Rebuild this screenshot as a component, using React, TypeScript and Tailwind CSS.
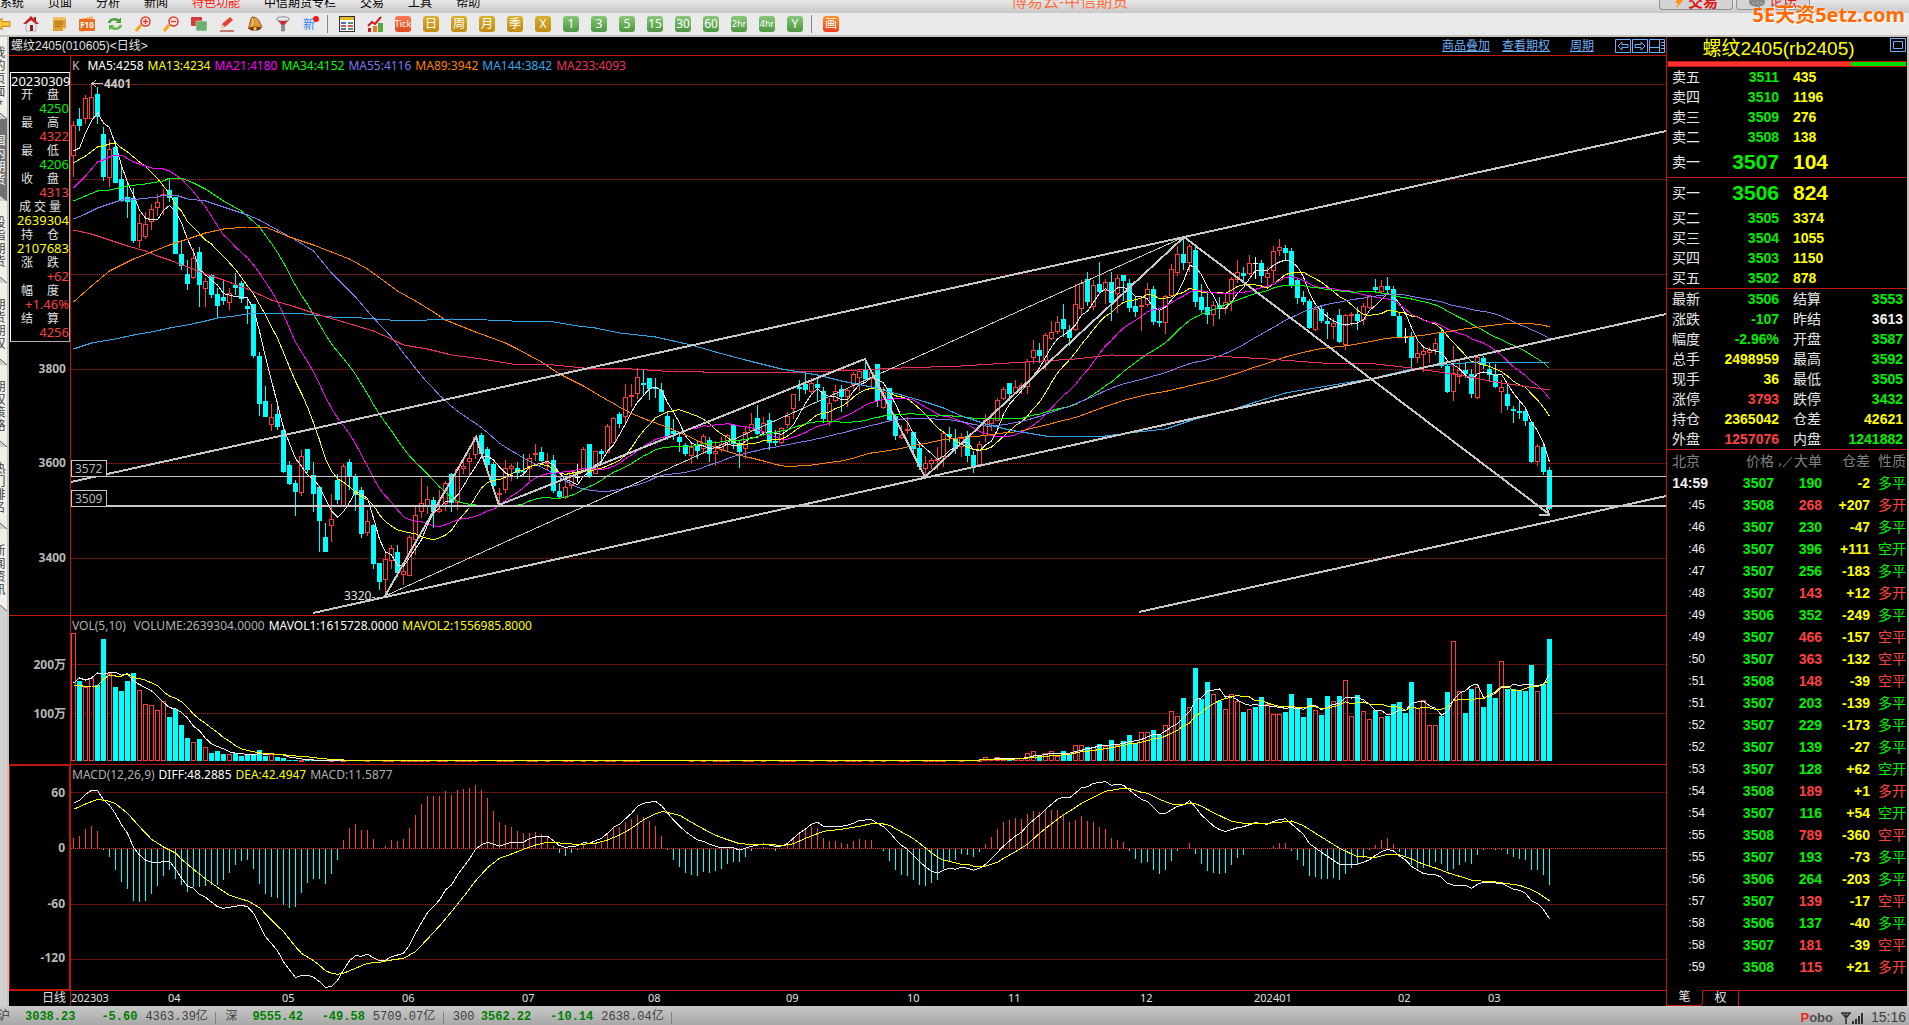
import { ReactNode } from "react";

const FIRST_X = 73.5;
const STEP = 6;

// every bar: colour, body top, body bottom, high, low
const CANDLES = `R 125 156 121 177,C 119 126 108 131,R 98 119 95 124,R 97 119 84 119,C 94 117 87 124,C 134 177 127 181,
R 149 178 139 187,C 147 183 141 183,C 179 201 167 202,C 197 202 181 218,C 198 241 188 243,R 223 241 214 248,
R 224 237 212 239,R 209 222 204 230,R 202 208 194 216,R 194 195 189 215,C 190 198 179 202,C 197 254 197 254,
C 254 266 242 270,C 274 284 260 290,R 258 278 248 279,C 252 285 247 307,R 281 289 278 307,C 275 295 274 298,
C 294 306 288 317,C 297 301 280 305,R 293 303 288 310,C 285 288 273 295,C 283 299 281 303,C 306 309 299 324,
C 304 356 304 358,C 356 404 352 416,C 401 417 386 417,R 417 425 404 431,C 414 427 401 430,C 430 472 427 473,
C 465 484 461 485,C 483 492 480 516,R 456 493 450 496,C 449 470 449 473,C 475 494 462 512,C 487 521 487 552,
C 537 552 523 552,R 519 526 494 542,C 480 500 474 504,R 466 506 464 507,C 462 476 459 490,C 476 495 474 511,
C 490 534 487 538,R 521 533 510 536,C 525 564 524 569,C 563 582 563 590,R 559 580 553 597,R 548 561 545 569,
C 552 573 545 577,R 571 575 564 585,R 537 576 535 576,R 515 540 505 555,R 503 512 478 518,R 499 506 486 514,
C 500 512 497 528,R 509 512 490 513,R 483 504 481 511,C 474 503 473 512,R 469 503 467 510,R 466 469 460 474,
R 458 462 453 476,R 437 455 436 459,C 435 454 433 456,C 449 465 447 468,C 464 486 462 487,R 493 495 488 504,
R 468 490 460 493,R 466 469 464 481,C 468 473 462 479,C 471 472 454 477,R 458 469 454 481,R 453 455 444 461,
C 452 461 447 462,R 462 463 453 471,C 460 491 455 493,C 491 497 483 498,R 487 498 477 499,R 471 486 470 489,
W 477 477 464 482,R 449 469 447 471,C 444 476 444 478,R 451 474 451 474,C 451 454 449 464,R 426 453 424 453,
R 418 443 417 443,C 414 424 412 428,R 397 417 384 423,R 395 397 384 407,R 377 394 368 399,C 383 385 370 395,
C 378 389 378 400,C 387 389 378 398,C 390 412 383 412,C 416 438 412 440,C 431 434 419 440,C 437 442 434 452,
C 445 454 443 456,R 447 456 444 463,C 446 451 440 459,R 436 449 434 454,C 440 454 437 462,R 451 454 441 466,
R 444 450 437 452,R 435 445 434 451,C 425 444 424 449,C 443 452 440 468,R 432 449 426 459,R 424 431 413 432,
C 418 434 405 435,R 423 433 417 436,C 420 443 413 450,C 441 443 430 446,R 428 443 427 444,R 416 425 412 428,
R 394 409 394 419,C 387 389 380 401,C 384 390 374 394,R 383 392 378 395,C 384 388 377 401,C 391 419 387 423,
R 403 422 398 426,R 391 401 385 402,C 389 397 385 412,R 390 397 389 407,R 374 385 372 389,R 371 378 369 391,
C 369 379 359 381,R 372 379 370 386,C 364 401 364 407,R 392 408 387 409,C 388 420 388 422,C 416 436 415 440,
R 435 438 425 439,R 429 431 417 434,C 432 449 432 457,C 448 467 445 470,R 463 469 456 477,R 460 464 458 469,
R 459 460 447 470,R 433 457 432 467,C 434 437 427 442,C 438 449 429 454,R 438 447 433 457,C 436 456 431 462,
C 455 467 451 473,R 444 465 441 465,R 420 436 414 442,R 418 424 413 431,R 400 421 398 421,R 389 399 387 400,
C 383 394 383 401,R 387 393 380 394,R 385 388 383 394,R 361 387 359 394,R 350 358 340 364,C 350 356 343 363,
R 335 361 333 370,R 332 339 321 340,R 322 332 316 334,C 319 329 304 337,C 330 338 325 346,R 304 330 284 331,
R 283 309 280 316,C 279 302 272 306,R 285 307 280 310,C 284 292 262 294,R 282 291 279 304,C 282 303 272 321,
R 278 294 275 313,C 275 281 275 301,C 283 308 279 312,C 306 312 297 317,R 305 307 297 331,R 289 305 283 307,
C 289 322 286 325,C 321 323 310 327,R 296 323 295 334,R 269 296 264 297,R 254 273 246 276,C 254 263 239 270,
R 246 263 244 272,C 250 302 247 307,C 297 310 284 313,C 307 315 291 324,R 305 315 301 326,C 305 309 297 319,
R 302 309 293 314,R 279 302 277 311,R 272 280 260 283,C 273 276 267 282,R 263 274 255 275,W 263 263 257 279,
C 263 276 260 283,R 273 278 267 286,R 251 271 246 283,R 247 251 239 256,C 248 253 245 261,C 251 285 248 288,
C 280 298 278 304,C 297 302 291 305,C 301 328 299 329,R 309 330 306 331,C 309 321 305 323,C 321 324 312 339,
R 323 327 318 339,C 315 342 309 343,R 315 345 314 350,R 314 316 312 326,C 314 321 307 330,R 306 320 303 325,
R 296 308 296 309,C 287 290 279 293,R 286 292 280 294,C 286 290 277 294,C 289 316 286 316,C 316 337 313 337,
W 337 337 328 343,C 337 358 332 368,R 353 358 342 363,R 351 355 346 372,R 350 353 347 363,R 343 350 338 355,
C 333 366 329 368,C 366 392 364 393,R 373 392 346 401,R 370 377 360 384,C 370 374 362 378,C 374 394 369 398,
R 357 398 355 399,C 358 365 356 369,C 369 375 362 382,C 374 387 364 388,R 387 392 380 413,C 394 406 383 410,
C 409 411 406 423,C 411 413 400 419,C 411 421 407 426,C 422 462 421 463,R 446 462 444 466,C 447 472 442 475,
C 470 509 467 510`
  .split(",")
  .map((row) => {
    const [dir, top, bottom, high, low] = row.trim().split(" ");
    return { dir, top: +top, bottom: +bottom, high: +high, low: +low };
  });

// volume bars, in thirds of a pixel below the top of the volume panel
const VOLUME_HEAD = [
  100, 243, 262, 235, 255, 117, 220, 261, 273, 243, 219, 271, 313, 316, 331, 304, 351, 327, 375, 414, 427, 417, 442,
  459, 453, 462, 463, 460, 468, 465, 462, 450, 468, 463, 471, 474,
];
const VOLUME_TAIL = [
  471, 478, 471, 478, 476, 475, 475, 460, 454, 468, 460, 454, 468, 453, 462, 436, 436, 442, 440, 432, 438, 420, 436,
  423, 405, 430, 397, 397, 390, 406, 376, 334, 349, 294, 322, 204, 297, 246, 283, 303, 328, 283, 303, 336, 328, 322,
  291, 312, 343, 343, 336, 282, 325, 351, 294, 331, 346, 288, 304, 288, 241, 349, 285, 334, 358, 331, 352, 348, 312,
  306, 340, 246, 325, 301, 376, 376, 348, 276, 124, 274, 339, 267, 262, 321, 252, 294, 184, 267, 268, 271, 273, 195,
  274, 252, 117,
];
const VOLUMES = [
  ...VOLUME_HEAD,
  ...Array(CANDLES.length - VOLUME_HEAD.length - VOLUME_TAIL.length).fill(480),
  ...VOLUME_TAIL,
];

const HISTOGRAM = [
  713, 708, 687, 678, 693, 749, 770, 809, 846, 866, 903, 906, 903, 881, 857, 828, 810, 836, 855, 875, 861, 862, 857,
  854, 855, 839, 819, 795, 783, 780, 806, 852, 881, 891, 893, 914, 923, 921, 879, 849, 836, 836, 851, 822, 780, 720,
  684, 672, 690, 690, 717, 744, 738, 720, 723, 717, 684, 645, 612, 588, 588, 588, 573, 585, 570, 567, 564, 555, 570,
  594, 633, 666, 675, 681, 693, 699, 699, 696, 702, 712, 738, 759, 767, 759, 749, 735, 744, 735, 727, 700, 682, 682,
  666, 657, 645, 652, 663, 678, 708, 749, 780, 801, 819, 825, 828, 816, 819, 813, 807, 792, 786, 786, 771, 753, 747,
  741, 747, 753, 748, 735, 712, 695, 690, 682, 684, 714, 723, 723, 729, 732, 723, 717, 720, 720, 747, 753, 783, 810,
  825, 828, 840, 855, 858, 849, 840, 807, 786, 780, 762, 765, 771, 756, 732, 711, 687, 666, 660, 654, 657, 642, 633,
  636, 630, 630, 630, 645, 666, 660, 648, 663, 666, 681, 687, 714, 720, 726, 753, 777, 789, 786, 810, 822, 810, 783,
  753, 747, 729, 762, 792, 813, 819, 822, 819, 795, 774, 765, 748, 748, 748, 748, 738, 729, 729, 753, 780, 798, 828,
  831, 837, 837, 834, 840, 822, 804, 795, 774, 749, 735, 720, 714, 732, 756, 768, 795, 804, 804, 798, 786, 792, 813,
  807, 795, 786, 792, 765, 750, 748, 749, 750, 762, 771, 777, 780, 810, 810, 825, 855,
];

const DIFF =
  "0:610 1:601 2:583 3:571 4:571 5:600 6:615 7:642 8:674 9:700 10:742 11:765 12:780 13:787 14:787 16:784 17:807 18:835 19:858 20:865 21:883 22:892 24:920 25:925 28:916 29:920 30:940 32:1010 34:1052 35:1085 36:1110 37:1132 38:1127 39:1126 40:1132 41:1145 42:1162 43:1160 44:1141 45:1110 46:1082 47:1067 48:1069 49:1063 51:1083 52:1081 53:1070 55:1060 56:1035 57:1000 58:968 59:938 60:920 61:900 62:870 63:855 64:825 66:777 67:748 68:734 69:727 71:739 73:727 75:727 76:716 77:711 79:709 80:722 81:737 82:742 83:740 84:737 85:728 86:730 87:722 88:715 89:700 90:682 91:673 93:640 94:619 95:610 97:604 98:617 100:660 102:695 104:720 105:724 106:733 108:744 110:743 111:751 112:745 113:739 115:732 117:739 118:738 119:730 121:699 122:687 123:673 124:667 125:679 128:679 129:676 130:670 131:661 133:659 134:670 135:680 136:697 137:718 138:736 139:748 140:767 141:785 142:800 143:814 144:820 145:811 146:805 147:808 148:802 149:805 150:811 151:805 152:793 154:757 155:738 157:708 158:697 159:676 160:660 161:646 162:628 163:613 164:598 165:592 166:594 167:579 168:563 169:560 170:550 172:545 173:556 174:553 175:556 177:585 178:598 179:605 181:640 182:640 184:619 185:615 186:602 187:622 188:645 190:678 191:689 192:694 193:689 194:683 195:680 197:668 199:673 200:664 201:659 202:656 203:672 205:703 206:731 208:757 211:793 214:793 215:787 216:779 217:766 218:755 219:748 220:753 221:768 222:780 223:799 225:821 227:824 228:832 229:850 230:856 232:856 233:865 234:853 235:847 238:850 240:868 241:871 242:880 243:902 244:911 245:929 246:956";
const DEA =
  "0:628 2:612 4:598 6:604 7:611 9:640 11:680 13:718 15:741 17:759 18:778 20:808 22:836 24:862 26:886 28:898 29:902 31:923 33:960 35:995 37:1040 38:1060 40:1082 41:1096 42:1112 43:1120 44:1123 45:1120 47:1105 49:1090 51:1087 53:1080 55:1075 57:1055 59:1017 61:978 63:935 65:890 67:843 69:803 71:775 73:762 75:748 77:735 79:727 82:730 84:734 87:730 89:720 91:705 93:685 95:659 97:641 98:635 99:637 101:646 103:667 105:687 107:706 109:719 111:731 114:734 116:733 118:737 120:731 122:715 125:694 128:688 131:679 133:671 135:672 136:676 138:696 140:716 142:744 144:772 145:781 146:784 148:793 149:793 150:799 152:799 154:787 155:775 157:755 159:733 161:700 163:671 165:644 166:634 168:610 170:592 172:574 175:565 176:566 178:577 179:580 181:598 183:612 184:613 187:611 188:619 190:638 193:664 195:670 199:670 201:667 203:663 205:677 207:700 209:722 211:745 214:770 217:772 219:763 221:764 223:777 225:793 227:804 229:818 231:829 233:841 237:846 241:856 243:869 244:878 245:890 246:902";

const MA144 =
  "0:349 3:343 7:339 10:335 13:332 16:328 19:325 22:321 24:318 27:316 30:313 33:313 37:313 40:315 43:317 48:318 55:321 59:320 63:319 69:320 73:321 80:322 84:326 87:328 91:333 97:337 103:345 107:352 112:360 118:369 124:375 128:381 133:387 138:395 142:402 145:408 148:416 152:424 156:430 162:436 172:436 176:433 182:429 187:419 193:410 197:402 202:393 208:387 216:379 223:369 228:365 234:362 246:363";
const MA233 =
  "0:230 3:234 6:240 9:246 12:251 14:256 16:260 19:267 22:274 25:280 29:289 33:300 37:307 41:315 45:322 50:331 53:339 55:345 59:349 63:355 68:359 73:364 80:365 85:368 93:369 98:371 105:372 121:372 127:371 138:368 148:366 156:363 167:359 173:355 190:356 199:359 208:363 217:364 223:368 231:375 237:382 246:390";

type Point = [number, number];

const parsePoints = (text: string): Point[] => text.split(" ").map((p) => p.split(":").map(Number) as Point);

const toLine = (points: Point[]) => points.map(([i, y]) => `${FIRST_X + i * STEP},${y.toFixed(1)}`).join(" ");

const movingAverage = (values: number[], n: number, head: string): Point[] => {
  const result = parsePoints(head);
  for (let i = n - 1; i < values.length; i++) {
    let sum = 0;
    for (let k = 0; k < n; k++) sum += values[i - k];
    result.push([i, sum / n]);
  }
  return result;
};

const thirds = (z: number) => 600 + z / 3;
const closes = CANDLES.map((c) => (c.dir === "C" ? c.bottom : c.top));
const volumeTops = VOLUMES.map(thirds);
const scaled = (text: string) => parsePoints(text).map(([i, z]) => [i, thirds(z)] as Point);

const MA_LINES = [
  { color: "#e8e8e8", points: movingAverage(closes, 5, "0:151 1:148 2:133 3:121") },
  {
    color: "#ffff00",
    points: movingAverage(closes, 13, "0:163 2:156 4:147 5:146 6:144 7:143 8:148 9:152 10:157 11:162"),
  },
  {
    color: "#ff00ff",
    points: movingAverage(closes, 21, "0:188 2:176 4:162 5:160 6:157 7:155 8:155 10:162 12:166 13:168 15:169 16:171 18:179"),
  },
  {
    color: "#00ff00",
    points: movingAverage(closes, 34, "0:201 2:196 4:191 6:190 9:186 12:184 15:181 16:178 18:178 20:183 22:189 25:201 28:211 31:227"),
  },
  {
    color: "#7b7bf0",
    points: movingAverage(
      closes,
      55,
      "0:219 2:214 4:208 6:204 8:200 11:199 14:197 15:195 17:195 19:199 22:201 25:207 29:215 31:220 34:230 37:240 40:251 43:273 47:297 50:318 53:337",
    ),
  },
  {
    color: "#ff8000",
    points: movingAverage(
      closes,
      89,
      "0:302 3:286 6:271 10:259 13:252 16:245 19:239 22:233 25:229 29:227 32:227 36:237 40:245 43:252 46:259 49:269 52:282 54:291 57:301 60:312 62:320 67:332 72:343 74:349 78:362 81:374 85:386",
    ),
  },
  { color: "#30a8e8", points: parsePoints(MA144) },
  { color: "#f03060", points: parsePoints(MA233) },
];

const MAVOL1 = [...parsePoints("0:683 1:678 2:680 3:678"), ...movingAverage(volumeTops, 5, "0:683").slice(1)];
const MAVOL2 = movingAverage(volumeTops, 10, "0:685 1:685 2:687 3:686 4:686 5:679 6:675 7:676 8:676");

const SELLS = [
  ["卖五", "3511", "435"],
  ["卖四", "3510", "1196"],
  ["卖三", "3509", "276"],
  ["卖二", "3508", "138"],
  ["卖一", "3507", "104"],
];
const BUYS = [
  ["买一", "3506", "824"],
  ["买二", "3505", "3374"],
  ["买三", "3504", "1055"],
  ["买四", "3503", "1150"],
  ["买五", "3502", "878"],
];

const G = "text-[#00f000]";
const R = "text-[#ff4040]";
const Y = "text-[#ffff00]";
const W = "text-[#f0f0f0]";

const STATS = [
  ["最新", "3506", G, "结算", "3553", G],
  ["涨跌", "-107", G, "昨结", "3613", W],
  ["幅度", "-2.96%", G, "开盘", "3587", G],
  ["总手", "2498959", Y, "最高", "3592", G],
  ["现手", "36", Y, "最低", "3505", G],
  ["涨停", "3793", R, "跌停", "3432", G],
  ["持仓", "2365042", Y, "仓差", "42621", Y],
  ["外盘", "1257076", R, "内盘", "1241882", G],
];

const TICKS = `14:59 3507 190 -2 多平 G,:45 3508 268 +207 多开 R,:46 3507 230 -47 多平 G,:46 3507 396 +111 空开 G,
:47 3507 256 -183 多平 G,:48 3507 143 +12 多开 R,:49 3506 352 -249 多平 G,:49 3507 466 -157 空平 R,
:50 3507 363 -132 空平 R,:51 3508 148 -39 空平 R,:51 3507 203 -139 多平 G,:52 3507 229 -173 多平 G,
:52 3507 139 -27 多平 G,:53 3507 128 +62 空开 G,:54 3508 189 +1 多开 R,:54 3507 116 +54 空开 G,
:55 3508 789 -360 空平 R,:55 3507 193 -73 多平 G,:56 3506 264 -203 多平 G,:57 3507 139 -17 空平 R,
:58 3506 137 -40 多平 G,:58 3507 181 -39 空平 R,:59 3508 115 +21 多开 R`
  .split(",")
  .map((row) => row.trim().split(" "));

const DAY_INFO = [
  ["开盘", "4250", G],
  ["最高", "4322", R],
  ["最低", "4206", G],
  ["收盘", "4313", R],
  ["成交量", "2639304", Y],
  ["持仓", "2107683", Y],
  ["涨跌", "+62", R],
  ["幅度", "+1.46%", R],
  ["结算", "4256", R],
];

const MONTHS: [string, number][] = [
  ["202303", 71],
  ["04", 168],
  ["05", 282],
  ["06", 402],
  ["07", 522],
  ["08", 648],
  ["09", 786],
  ["10", 907],
  ["11", 1008],
  ["12", 1140],
  ["202401", 1254],
  ["02", 1398],
  ["03", 1488],
];

const SIDE_TABS = ["我的页面*", "国内期货", "股指期货", "期货期权", "期权策略", "热门排名", "新闻资讯"];
const MENUS = ["系统", "页面", "分析", "新闻", "特色功能", "中信期货专栏", "交易", "工具", "帮助"];

const Icon = ({ children }: { children: ReactNode }) => (
  <svg viewBox="0 0 16 16" className="size-4 shrink-0">
    {children}
  </svg>
);

const drawnIcons: { name: string; art: ReactNode }[] = [
  {
    name: "后退",
    art: <path d="M1 8 7 2v3.500h8v5H7V14z" fill="#f7c23c" stroke="#c98a10" />,
  },
  {
    name: "首页",
    art: (
      <>
        <path d="M3 8v7h10V8L8 4z" fill="#e8e8ee" stroke="#999" strokeWidth=".6" />
        <path d="M11 1h2v4h-2z" fill="#a02020" />
        <path d="M8 0 0 8h3l5-4 5 4h3z" fill="#c8202a" />
        <path d="M7 9h3v6H7z" fill="#8a2020" />
      </>
    ),
  },
  {
    name: "公告",
    art: (
      <>
        <path d="M2 1h13v11l-3 3H2z" fill="#e0a030" />
        <path d="M2 1h13v3H2z" fill="#f0c060" />
        <path d="M4 6h8M4 8h8M4 10.500h6" stroke="#a86c10" />
        <path d="m12 15 3-3h-3z" fill="#fbe3a0" />
      </>
    ),
  },
  {
    name: "F10",
    art: (
      <>
        <path d="M1 3 14 0l1 13-13 3z" fill="#f8b070" />
        <rect x="0" y="3" width="16" height="12" rx="1" fill="#ee6a1c" />
        <text x="8" y="12" fontSize="8" fontWeight="700" textAnchor="middle" fill="#fff">
          F10
        </text>
      </>
    ),
  },
  {
    name: "刷新",
    art: (
      <>
        <path d="M2 7c1-4 7-5 10-2" fill="none" stroke="#4aa030" strokeWidth="2.500" />
        <path d="M14 1.500v5.500H8.500z" fill="#4aa030" />
        <path d="M14 9c-1 4-7 5-10 2" fill="none" stroke="#62b848" strokeWidth="2.500" />
        <path d="M2 14.500V9h5.500z" fill="#62b848" />
      </>
    ),
  },
  {
    name: "放大",
    art: (
      <>
        <path d="m6 9-5 6" stroke="#f0a818" strokeWidth="3" />
        <circle cx="10.500" cy="5.500" r="4.500" fill="#ffe9e4" stroke="#e03a30" strokeWidth="1.500" />
        <path d="M8 5.500h5M10.500 3v5" stroke="#e03a30" strokeWidth="1.500" />
      </>
    ),
  },
  {
    name: "缩小",
    art: (
      <>
        <path d="m6 9-5 6" stroke="#f0a818" strokeWidth="3" />
        <circle cx="10.500" cy="5.500" r="4.500" fill="#ffe9e4" stroke="#e03a30" strokeWidth="1.500" />
        <path d="M8 5.500h5" stroke="#e03a30" strokeWidth="1.500" />
      </>
    ),
  },
  {
    name: "叠加",
    art: (
      <>
        <rect x="0" y="1" width="11" height="9" rx="1" fill="#d83a3a" />
        <rect x="5" y="5" width="11" height="10" rx="1" fill="#6cb070" stroke="#d0e8d0" strokeWidth=".6" />
      </>
    ),
  },
  {
    name: "画线",
    art: (
      <>
        <path d="m2 12 1-4 8-7 3 3-8 7z" fill="#e84030" />
        <path d="m2 12 1-4 3 3z" fill="#f8d8a8" />
        <path d="M1 15h14" stroke="#b05040" strokeWidth="1.500" />
      </>
    ),
  },
  {
    name: "预警",
    art: (
      <>
        <path d="M5 1c5 0 7 3 8 6l2 4-10 3-4-2c3-3 1-8 4-11z" fill="#e09a38" stroke="#7a3c10" strokeWidth=".8" />
        <path d="M5 3c2 2 1 5-1 8" fill="none" stroke="#f8d890" />
        <ellipse cx="8" cy="12.500" rx="6" ry="2" fill="#7a3c10" />
        <circle cx="8" cy="12.500" r="1.500" fill="#f8d060" />
      </>
    ),
  },
  {
    name: "筛选",
    art: (
      <>
        <path d="M2 3h12L9.500 9v6h-3V9z" fill="#909090" stroke="#686868" strokeWidth=".6" />
        <ellipse cx="8" cy="3" rx="6.500" ry="2.200" fill="#e8e8e8" stroke="#777" strokeWidth=".8" />
        <path d="M4 5h8L8.500 9h-1z" fill="#e02020" />
      </>
    ),
  },
  {
    name: "新",
    art: (
      <>
        <text x="6" y="13" fontSize="12" textAnchor="middle" fill="#2f86e8">
          新
        </text>
        <circle cx="13" cy="3" r="3" fill="#f01818" />
      </>
    ),
  },
];

const chartIcons: { name: string; art: ReactNode }[] = [
  {
    name: "报价",
    art: (
      <>
        <rect x=".500" y=".500" width="15" height="15" fill="#fff" stroke="#303030" />
        <path d="M1 1h14v3H1z" fill="#e8b820" />
        <path d="M2 7h5M2 13h5" stroke="#20408a" strokeWidth="1.500" />
        <path d="M9 7h5M9 13h5" stroke="#207040" strokeWidth="1.500" />
        <path d="M2 10h5M9 10h5" stroke="#c02020" strokeWidth="1.500" />
      </>
    ),
  },
  {
    name: "走势",
    art: (
      <>
        <path d="m1 10 4-4 3 2 6-7" fill="none" stroke="#d81818" strokeWidth="2" />
        <path d="M1 12h3v4H1z" fill="#c82020" />
        <path d="M6 10h4v6H6z" fill="#e87828" />
        <path d="M11 7h5v9h-5z" fill="#58a838" />
      </>
    ),
  },
];

const PERIODS = ["Tick", "日", "周", "月", "季", "X", "1", "3", "5", "15", "30", "60", "2hr", "4hr", "Y"];

const periodClass = (label: string, index: number) => {
  if (index === 0) return "from-[#f87850] to-[#e04818]";
  return index < 6 ? "from-[#d8b030] to-[#c08a10]" : "from-[#88c878] to-[#4c9840]";
};

const MenuBar = () => (
  <header className="flex h-[13px] shrink-0 items-end overflow-hidden bg-linear-to-b from-[#e8e8e8] to-[#c8c8c8] text-xs text-black">
    <nav className="flex gap-6 pb-1">
      {MENUS.map((menu) => (
        <button key={menu} className={`leading-3 ${menu === "特色功能" ? "text-[#ff2010]" : ""}`}>
          {menu}
        </button>
      ))}
    </nav>
    <h1 className="flex-1 pb-1 text-center text-base leading-4 text-[#ff7040]">博易云-中信期货</h1>
    <div className="flex items-end gap-[3px] self-start pr-[99px]">
      <button className="flex h-[10px] w-[74px] items-end justify-center gap-1 rounded-b border border-t-0 border-[#909090] bg-[#d4d4d4] text-[15px] leading-4 font-bold text-[#e01818]">
        <svg viewBox="0 0 10 14" className="h-3.5 w-2.5">
          <path d="M6 0 1 8h3l-2 6 7-9H6l2-5z" fill="#ff9010" />
        </svg>
        交易
      </button>
      <button className="flex h-[10px] w-[74px] items-end justify-center gap-1 rounded-b border border-t-0 border-[#909090] bg-[#d4d4d4] text-sm leading-4 text-[#e01818]">
        <svg viewBox="0 0 16 14" className="h-3.5 w-4">
          <ellipse cx="8" cy="7" rx="8" ry="5" fill="#888" />
          <path d="m7 11 4 3v-4z" fill="#888" />
          <path d="M4 8h1M8 8h1M12 8h1" stroke="#eee" />
        </svg>
        论坛
      </button>
    </div>
  </header>
);

const ToolBar = () => (
  <div className="flex h-6 shrink-0 items-center gap-3 overflow-hidden border-b-2 border-[#c8c0ba] bg-[#eaeaea]">
    <div className="-ml-[5px] flex gap-3">
      {drawnIcons.map(({ name, art }) => (
        <button key={name} title={name} aria-label={name}>
          <Icon>{art}</Icon>
        </button>
      ))}
    </div>
    <div className="-ml-1 h-[18px] w-px bg-[#888]" />
    <div className="-ml-px flex gap-3">
      {chartIcons.map(({ name, art }) => (
        <button key={name} title={name} aria-label={name}>
          <Icon>{art}</Icon>
        </button>
      ))}
      {PERIODS.map((label, i) => (
        <button
          key={label}
          className={`flex size-4 items-center justify-center rounded-[3px] bg-linear-to-b leading-4 text-white ${periodClass(label, i)} ${
            label.length > 2 ? "text-[9px]" : "text-xs"
          }`}
        >
          {label}
        </button>
      ))}
    </div>
    <div className="-ml-1 h-[18px] w-px bg-[#888]" />
    <button className="-ml-px flex size-4 items-center justify-center rounded-[3px] bg-linear-to-b from-[#ff9030] to-[#f03818] text-xs leading-4 text-white">
      画
    </button>
  </div>
);

const SideTabs = () => (
  <aside className="flex w-[9px] shrink-0 flex-col overflow-hidden border-r-2 border-[#c8c0ba] bg-[#d0d0d0]">
    {SIDE_TABS.map((tab, i) => (
      <button
        key={tab}
        className={`relative flex h-[82px] w-full shrink-0 items-center justify-end text-xs ${
          i === 1 ? "bg-[#707070] text-white" : "bg-[#f0f0e8] text-[#404040]"
        }`}
      >
        <span className="flex w-3 shrink-0 flex-col pr-px text-center">
          {tab.split("").map((char, k) => (
            <span key={k} className="-ml-0.5 leading-[13px]">
              {char}
            </span>
          ))}
        </span>
        <svg viewBox="0 0 7 6" className="absolute bottom-0 left-0 h-1.5 w-full">
          <path d="M0 0 7 6H0z" fill="#d0d0d0" />
          <path d="m0 0 7 6" stroke="#606060" />
        </svg>
      </button>
    ))}
  </aside>
);

const Grid = ({ rows, bright }: { rows: number[]; bright?: number }) => (
  <g strokeDasharray="1 1" strokeWidth="1">
    {rows.map((y) => (
      <path key={y} d={`M71 ${y}H1666`} stroke={y === bright ? "#ff2020" : "#c80c0c"} />
    ))}
  </g>
);

const barColor = (dir: string) => (dir === "R" ? "#ff3c3c" : dir === "C" ? "#00ffff" : "#ffffff");

const PriceChart = () => (
  <svg viewBox="71 74 1595 541" preserveAspectRatio="none" shapeRendering="crispEdges" className="absolute inset-0 size-full">
    <Grid rows={[84.5, 179.5, 274.5, 369.5, 463.5, 558.5]} />
    {CANDLES.map((c, i) => {
      const x = FIRST_X + i * STEP;
      const height = c.bottom - c.top;
      return (
        <g key={i} stroke={barColor(c.dir)}>
          <path d={`M${x} ${c.high}V${c.top}M${x} ${c.bottom}V${c.low}`} />
          {c.dir === "C" && <rect x={x - 2.5} y={c.top} width="5" height={height} fill="#00ffff" stroke="none" />}
          {c.dir === "R" && <rect x={x - 2} y={c.top + 0.5} width="4" height={Math.max(height - 1, 1)} fill="#000" />}
          {c.dir === "W" && <path d={`M${x - 2.5} ${c.top + 0.5}h5`} />}
        </g>
      );
    })}
    {MA_LINES.map((line) => (
      <polyline key={line.color} points={toLine(line.points)} fill="none" stroke={line.color} />
    ))}
    <g stroke="#c8c8c8" fill="none" strokeWidth="2">
      <path d="M71 476.500H1666M385 596 1184 237" strokeWidth="1" />
      <path d="M71 506H1666" />
      <path d="M71 482 1666 131M313 613 1666 314M1139 612 1666 496" />
      <path d="M385 596 476 437 499 505 865 359 925 477 1184 237 1549 514" />
      <path d="M1539 515H1550M1546 505 1549 515" />
    </g>
    <g stroke="#c8c8c8" fill="none" strokeWidth="1">
      <path d="M92 83.500H103M96 80 92 83.500 96 87" />
      <path d="M372 597.500H385" strokeDasharray="3 2" />
    </g>
  </svg>
);

const VolumeChart = () => (
  <svg viewBox="71 634 1595 130" preserveAspectRatio="none" shapeRendering="crispEdges" className="absolute inset-0 size-full overflow-visible">
    <Grid rows={[664.5, 713.5]} />
    {volumeTops.map((top, i) => {
      const x = FIRST_X + i * STEP;
      const y = Math.round(top);
      return CANDLES[i].dir === "R" ? (
        <rect key={i} x={x - 2} y={y + 0.5} width="4" height={Math.max(760 - y, 0.5)} fill="none" stroke="#ff3c3c" />
      ) : (
        <rect key={i} x={x - 2.5} y={y} width="5" height={761 - y} fill="#00ffff" />
      );
    })}
    <polyline points={toLine(MAVOL1)} fill="none" stroke="#f0f0f0" />
    <polyline points={toLine(MAVOL2)} fill="none" stroke="#ffff00" />
  </svg>
);

const MacdChart = () => (
  <svg viewBox="71 783 1595 207" preserveAspectRatio="none" shapeRendering="crispEdges" className="absolute inset-0 size-full overflow-visible">
    <Grid rows={[792.5, 848.5, 904.5, 959.5]} bright={848.5} />
    {HISTOGRAM.map((z, i) => (
      <path key={i} d={`M${FIRST_X + i * STEP} 848.500V${thirds(z)}`} stroke={z < 745 ? "#ff3c3c" : "#00ffff"} />
    ))}
    <polyline points={toLine(scaled(DIFF))} fill="none" stroke="#f0f0f0" />
    <polyline points={toLine(scaled(DEA))} fill="none" stroke="#ffff00" />
  </svg>
);

type Legend = [string, string][];

type PanelProps = {
  className: string;
  axisClass?: string;
  top: number;
  height: number;
  labels: [string, number][];
  legend: Legend;
  side?: ReactNode;
  children: ReactNode;
};

const Panel = ({ className, axisClass = "", top, height, labels, legend, side, children }: PanelProps) => (
  <section className={`flex min-h-0 border-b border-[#c01808] ${className}`}>
    <div className={`relative w-[62px] shrink-0 border-r border-[#c01808] ${axisClass}`}>
      {side}
      {labels.map(([text, y]) => (
        <span
          key={text}
          className="absolute right-1 -translate-y-1/2 text-xs leading-4 font-bold text-[#b8b8b8]"
          style={{ top: `${((y - top) / height) * 100}%` }}
        >
          {text}
        </span>
      ))}
    </div>
    <div className="flex min-w-0 flex-1 flex-col">
      <div className="flex h-[18px] shrink-0 items-center gap-1 overflow-hidden pt-0.5 pl-px text-xs leading-4 whitespace-nowrap">
        {legend.map(([text, color]) => (
          <span key={text} className={color}>
            {text}
          </span>
        ))}
      </div>
      <div className="relative min-h-0 flex-1">{children}</div>
    </div>
  </section>
);

const DayInfo = () => (
  <div className="relative z-10 mt-4 ml-px flex flex-col border border-[#b0b0b0] border-t-white border-l-white bg-black text-[13px]">
    <div className="text-right leading-4 text-white">20230309</div>
    {DAY_INFO.map(([label, value, color]) => (
      <div key={label} className="pb-0.5">
        <div className={`flex justify-between text-xs leading-3 text-[#e0e0e0] ${label.length > 2 ? "px-2" : "px-2.5"}`}>
          {label.split("").map((char) => (
            <span key={char}>{char}</span>
          ))}
        </div>
        <div className={`text-right leading-[14px] ${color}`}>{value}</div>
      </div>
    ))}
  </div>
);

const priceLegend: Legend = [
  ["K", "mr-1 text-[#c0c0c0]"],
  ["MA5:4258", "text-white"],
  ["MA13:4234", "text-[#ffff00]"],
  ["MA21:4180", "text-[#ff00ff]"],
  ["MA34:4152", "text-[#00ff00]"],
  ["MA55:4116", "text-[#7b7bf0]"],
  ["MA89:3942", "text-[#ff8000]"],
  ["MA144:3842", "text-[#30a8e8]"],
  ["MA233:4093", "text-[#f03060]"],
];

const volumeLegend: Legend = [
  ["VOL(5,10)", "mr-1 text-[#b0b0b0]"],
  ["VOLUME:2639304.0000", "text-[#b0b0b0]"],
  ["MAVOL1:1615728.0000", "text-white"],
  ["MAVOL2:1556985.8000", "text-[#ffff00]"],
];

const macdLegend: Legend = [
  ["MACD(12,26,9)", "text-[#b0b0b0]"],
  ["DIFF:48.2885", "text-white"],
  ["DEA:42.4947", "text-[#ffff00]"],
  ["MACD:11.5877", "text-[#b0b0b0]"],
];

const ChartHeader = () => (
  <div className="flex h-[19px] shrink-0 items-center border-b border-[#c01808] pl-[2px] text-xs leading-4">
    <h2 className="flex-1 font-['Liberation_Sans','Noto_Sans_CJK_SC',sans-serif] text-[#e0e0e0]">
      螺纹2405(010605)&lt;日线&gt;
    </h2>
    <nav className="flex items-center text-[#70b0f8]">
      <a href="#overlay" className="mr-3 underline">
        商品叠加
      </a>
      <a href="#options" className="mr-5 underline">
        查看期权
      </a>
      <a href="#period" className="mr-[21px] underline">
        周期
      </a>
      <button aria-label="向左">
        <svg viewBox="0 0 17 16" className="h-4 w-[17px]" fill="none" stroke="#70b0f8">
          <path d="M.500 1.500h15v13H.500zM3 8l4-4v2.500h6v3H7V12z" />
        </svg>
      </button>
      <button aria-label="向右">
        <svg viewBox="0 0 17 16" className="h-4 w-[17px]" fill="none" stroke="#70b0f8">
          <path d="M.500 1.500h15v13H.500zM13 8 9 4v2.500H3v3h6V12z" />
        </svg>
      </button>
      <button aria-label="布局">
        <svg viewBox="0 0 17 16" className="h-4 w-[17px]" fill="none" stroke="#70b0f8">
          <path d="M.500 1.500h15v13H.500zM10.500 1.500v13M.500 9.500h10M12 4.500h3M12 7.500h3M12 10.500h3" />
        </svg>
      </button>
    </nav>
  </div>
);

const ChartArea = () => (
  <main className="flex min-w-0 flex-1 flex-col">
    <ChartHeader />
    <Panel
      className="flex-[559]"
      top={56}
      height={559}
      labels={[
        ["3800", 369],
        ["3600", 463],
        ["3400", 558],
      ]}
      legend={priceLegend}
      side={<DayInfo />}
    >
      <PriceChart />
      <span className="absolute top-[1.8%] left-[33px] -translate-y-1/2 text-xs leading-4 font-bold text-[#c8c8c8]">4401</span>
      <span className="absolute top-[96.500%] left-[273px] -translate-y-1/2 text-xs leading-4 text-[#e0e0e0]">3320</span>
      <span className="absolute top-[71.400%] left-0 w-9 border border-[#c8c8c8] bg-black pl-[3px] text-xs leading-[15px] text-[#b8b8b8]">
        3572
      </span>
      <span className="absolute top-[76.900%] left-0 w-9 border border-[#c8c8c8] bg-black pl-[3px] text-xs leading-[15px] text-[#b8b8b8]">
        3509
      </span>
    </Panel>
    <Panel
      className="flex-[148]"
      top={616}
      height={148}
      labels={[
        ["200万", 665],
        ["100万", 714],
      ]}
      legend={volumeLegend}
    >
      <VolumeChart />
    </Panel>
    <Panel
      className="flex-[225]"
      axisClass="border border-r-2"
      top={765}
      height={225}
      labels={[
        ["60", 792],
        ["0", 848],
        ["-60", 904],
        ["-120", 959],
      ]}
      legend={macdLegend}
    >
      <MacdChart />
    </Panel>
    <div className="flex h-[15px] shrink-0 text-[11px] leading-[14px] text-[#e0e0e0]">
      <div className="w-[62px] border-r border-[#c01808] pr-1 text-right text-xs leading-[14px]">日线</div>
      <div className="relative flex-1">
        {MONTHS.map(([text, x]) => (
          <span key={text} className="absolute" style={{ left: `${((x - 71) / 1595) * 100}%` }}>
            {text}
          </span>
        ))}
      </div>
    </div>
  </main>
);

const QuoteRow = ({ row, first }: { row: string[]; first: boolean }) => (
  <tr className={first ? "h-[30px] text-[21px]" : "h-5 text-sm"}>
    <th className="w-10 p-0 pl-[5px] text-left text-sm font-normal text-[#e8e8e8]">{row[0]}</th>
    <td className="w-[72px] p-0 text-right leading-5 font-bold text-[#00f000]">{row[1]}</td>
    <td className="p-0 pl-[14px] text-left leading-5 font-bold text-[#ffff00]">{row[2]}</td>
  </tr>
);

const QuotePanel = () => (
  <aside className="flex w-[243px] shrink-0 flex-col border-r-2 border-l border-r-[#c8c0ba] border-l-[#c01808] text-sm leading-5">
    <div className="flex h-6 shrink-0 items-start">
      <h2 className="flex-1 text-center text-[19px] leading-6 text-[#ffff00]">螺纹2405(rb2405)</h2>
      <button aria-label="最大化" className="mr-px pt-px">
        <svg viewBox="0 0 16 14" className="h-3.5 w-4" fill="none" stroke="#70b0f8">
          <path d="M.500.500h15v13H.500zM3.500 3.500h9v7h-9z" />
        </svg>
      </button>
    </div>
    <div className="flex h-1.5 shrink-0 border-y border-[#c01808] px-px">
      <div className="w-[77%] bg-[#ff3030]" />
      <div className="flex-1 bg-[#00e000]" />
    </div>
    <table className="w-full table-fixed border-collapse border-b border-[#c01808]">
      <tbody>
        {SELLS.map((row) => (
          <QuoteRow key={row[0]} row={row} first={row[0] === "卖一"} />
        ))}
      </tbody>
    </table>
    <table className="w-full table-fixed border-collapse border-b border-[#c01808]">
      <tbody>
        {BUYS.map((row) => (
          <QuoteRow key={row[0]} row={row} first={row[0] === "买一"} />
        ))}
      </tbody>
    </table>
    <table className="w-full table-fixed border-collapse border-b border-[#c01808]">
      <tbody>
        {STATS.map(([label, value, color, label2, value2, color2]) => (
          <tr key={label} className="h-5">
            <th className="w-10 p-0 pl-[5px] text-left font-normal text-[#e8e8e8]">{label}</th>
            <td className={`w-[72px] p-0 text-right font-bold ${color}`}>{value}</td>
            <th className="w-12 p-0 pl-[14px] text-left font-normal text-[#e8e8e8]">{label2}</th>
            <td className={`p-0 pr-1 text-right font-bold ${color2}`}>{value2}</td>
          </tr>
        ))}
      </tbody>
    </table>
    <table className="w-full table-fixed border-collapse">
      <thead>
        <tr className="h-[22px] text-[#808080]">
          <th className="w-[42px] p-0 pl-[5px] text-left font-normal">北京</th>
          <th className="w-[65px] p-0 text-right font-normal">价格</th>
          <th className="w-12 p-0 text-right font-normal whitespace-nowrap">
            <svg viewBox="0 0 14 12" className="mr-px inline h-3 w-3.5" fill="none" stroke="#808080">
              <path d="M0 8h2l-2 3M4 11 13 1" />
            </svg>
            大单
          </th>
          <th className="w-12 p-0 text-right font-normal">仓差</th>
          <th className="p-0 pr-px text-right font-normal">性质</th>
        </tr>
      </thead>
      <tbody>
        {TICKS.map(([time, price, size, diff, kind, side], i) => (
          <tr key={i} className="h-[22px] font-bold">
            <td className={`p-0 text-right text-[#f0f0f0] ${i === 0 ? "pr-px" : "pr-1 text-xs font-normal"}`}>{time}</td>
            <td className="p-0 text-right text-[#00f000]">{price}</td>
            <td className={`p-0 text-right ${side === "R" ? R : G}`}>{size}</td>
            <td className="p-0 text-right text-[#ffff00]">{diff}</td>
            <td className={`p-0 pr-px text-right font-normal ${side === "R" ? R : G}`}>{kind}</td>
          </tr>
        ))}
      </tbody>
    </table>
    <div className="flex-1" />
    <div className="flex h-4 shrink-0 text-xs leading-[15px] text-[#e8e8e8]">
      <button className="w-9 rounded-br-sm border-r border-b border-[#c01808]">笔</button>
      <button className="w-9 border-t border-r border-[#c01808] text-center">权</button>
      <div className="flex-1 border-t border-[#c01808]" />
    </div>
  </aside>
);

const INDEXES = [
  ["沪", "3038.23", "-5.60", "4363.39亿"],
  ["深", "9555.42", "-49.58", "5709.07亿"],
  ["300", "3562.22", "-10.14", "2638.04亿"],
];

const StatusBar = () => (
  <footer className="flex h-[19px] shrink-0 items-center overflow-hidden bg-linear-to-b from-[#c8c8c8] to-[#a8a8a8] pt-1 pr-[3px] font-['Liberation_Mono','Noto_Sans_CJK_SC',monospace] text-xs leading-[15px] text-[#404040]">
    {INDEXES.map(([name, price, change, amount], i) => (
      <div key={name} className={`flex items-center whitespace-nowrap ${i === 0 ? "-ml-0.5" : "ml-[9px]"}`}>
        <span className={i === 2 ? "w-7" : "w-[27px]"}>{name}</span>
        <span className="font-bold text-[#008000]">{price}</span>
        <span className="w-[62px] text-right font-bold text-[#008000]">{change}</span>
        <span className="ml-2 w-[70px]">{amount}</span>
        <span className="h-3 w-px bg-[#808080]" />
      </div>
    ))}
    <div className="ml-auto flex items-center gap-2 font-['Liberation_Sans',sans-serif] text-sm leading-[15px]">
      <span className="text-[13px] font-bold text-[#505050]">
        <span className="text-[#f02020]">P</span>obo
      </span>
      <svg viewBox="0 0 22 12" className="h-3 w-[22px]" fill="none" stroke="#303030">
        <path d="M0 1h10M5 1v11M1 1l4 5 4-5" strokeWidth="1.500" />
        <path d="M12 12v-3M15 12V7M18 12V4M21 12V1" strokeWidth="2" />
      </svg>
      <time>15:16</time>
    </div>
  </footer>
);

const App = () => (
  <div className="relative flex h-screen min-h-[900px] flex-col overflow-hidden bg-black font-['Noto_Sans','Noto_Sans_CJK_SC',sans-serif]">
    <MenuBar />
    <ToolBar />
    <span className="absolute top-[3px] right-1 text-xl leading-6 font-bold text-[#ff6a00] [text-shadow:0_0_2px_#fff,1px_1px_1px_#fff]">
      5E天资5etz.com
    </span>
    <div className="flex min-h-0 flex-1">
      <SideTabs />
      <ChartArea />
      <div className="flex font-['Liberation_Sans','Noto_Sans_CJK_SC',sans-serif]">
        <QuotePanel />
      </div>
    </div>
    <StatusBar />
  </div>
);

export default App;
